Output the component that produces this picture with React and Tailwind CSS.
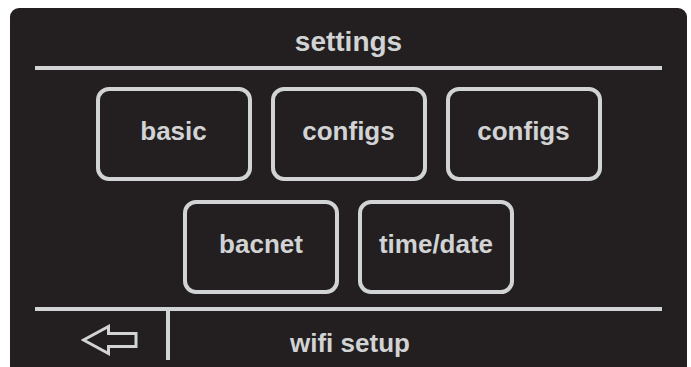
import React from 'react';

const BackArrow = () => (
  <svg width="58" height="32" viewBox="0 0 58 32" fill="none">
    <polygon
      points="2.5,16 27.5,2.5 27.5,9.5 55,9.5 55,22.5 27.5,22.5 27.5,29.5"
      stroke="#d1d3d4"
      strokeWidth="3"
      strokeLinejoin="miter"
    />
  </svg>
);

const MenuButton = ({ label }) => (
  <button className="w-[156px] h-[94px] border-[4px] border-[#d1d3d4] rounded-[13px] flex items-center justify-center pb-[6px] text-[26px] leading-[26px] font-bold text-[#d1d3d4]">
    {label}
  </button>
);

const App = () => {
  return (
    <div className="w-[691px] h-[367px] bg-white overflow-hidden pt-[8px] pl-[10px] font-['Liberation_Sans',Arial,sans-serif]">
      <div className="w-[677px] h-[359px] bg-[#231f20] rounded-t-[9px] px-[25px] flex flex-col">
        {/* Header */}
        <div className="h-[58px] pt-[20px] text-center text-[28px] leading-[28px] font-bold text-[#d1d3d4]">
          settings
        </div>
        <div className="h-[4px] bg-[#d1d3d4]" />

        {/* Menu grid */}
        <div className="mt-[17px] flex flex-col items-center gap-[19px]">
          <div className="flex gap-[19px]">
            <MenuButton label="basic" />
            <MenuButton label="configs" />
            <MenuButton label="configs" />
          </div>
          <div className="flex gap-[19px]">
            <MenuButton label="bacnet" />
            <MenuButton label="time/date" />
          </div>
        </div>

        {/* Footer */}
        <div className="mt-[13px] h-[4px] bg-[#d1d3d4]" />
        <div className="flex h-[49px]">
          <div className="w-[131px] pl-[46px] pt-[13px]">
            <BackArrow />
          </div>
          <div className="w-[4px] bg-[#d1d3d4]" />
          <div className="ml-[120px] pt-[19px] text-[26px] leading-[26px] font-bold text-[#d1d3d4]">
            wifi setup
          </div>
        </div>
      </div>
    </div>
  );
};

export default App;
